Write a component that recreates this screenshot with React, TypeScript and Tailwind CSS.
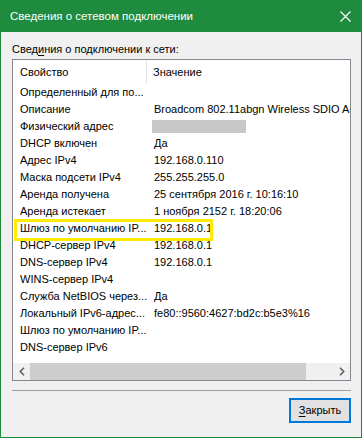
const rows: [string, string | null][] = [
  ['Определенный для по...', ''],
  ['Описание', 'Broadcom 802.11abgn Wireless SDIO Adapter'],
  ['Физический адрес', null],
  ['DHCP включен', 'Да'],
  ['Адрес IPv4', '192.168.0.110'],
  ['Маска подсети IPv4', '255.255.255.0'],
  ['Аренда получена', '25 сентября 2016 г. 10:16:10'],
  ['Аренда истекает', '1 ноября 2152 г. 18:20:06'],
  ['Шлюз по умолчанию IP...', '192.168.0.1'],
  ['DHCP-сервер IPv4', '192.168.0.1'],
  ['DNS-сервер IPv4', '192.168.0.1'],
  ['WINS-сервер IPv4', ''],
  ['Служба NetBIOS через...', 'Да'],
  ['Локальный IPv6-адрес...', 'fe80::9560:4627:bd2c:b5e3%16'],
  ['Шлюз по умолчанию IP...', ''],
  ['DNS-сервер IPv6', ''],
];

function Chevron({ dir }: { dir: 'left' | 'right' }) {
  return (
    <svg width="6" height="9" viewBox="0 0 6 9" fill="none">
      <path
        d={dir === 'left' ? 'M5 0.8 L1.3 4.5 L5 8.2' : 'M1 0.8 L4.7 4.5 L1 8.2'}
        stroke="#606060"
        strokeWidth="1.6"
      />
    </svg>
  );
}

export default function App() {
  return (
    <div
      className="w-[362px] h-[438px] flex flex-col border border-[#1f8b3e] bg-[#f0f0f0] text-black text-[11px]"
      style={{ fontFamily: '"Liberation Sans", Arial, sans-serif' }}
    >
      {/* title bar */}
      <div className="h-[31px] shrink-0 bg-[#1f8b3e] flex items-center justify-between pl-[9px] pr-[10px]">
        <span className="text-white text-[11.5px] leading-none">Сведения о сетевом подключении</span>
        <svg width="11" height="11" viewBox="0 0 11 11" stroke="#fff" strokeWidth="1.1">
          <path d="M0.5 0.5 L10.5 10.5 M10.5 0.5 L0.5 10.5" />
        </svg>
      </div>

      <div className="flex-1 flex flex-col pl-[11px] pr-[10px] pt-[9px]">
        <div className="h-[16px] leading-[16px] whitespace-nowrap">
          Свед<span className="underline underline-offset-2">и</span>ния о подключении к сети:
        </div>

        {/* list view */}
        <div className="mt-[2px] h-[322px] border border-[#828790] bg-white flex flex-col overflow-hidden">
          <div className="h-[24px] shrink-0 flex items-center">
            <div className="w-[134px] h-full pl-[7px] flex items-center border-r border-[#e5e5e5]">Свойство</div>
            <div className="pl-[6px]">Значение</div>
          </div>

          <div className="flex-1 flex flex-col">
            {rows.map(([k, v], i) => (
              <div key={i} className="relative h-[17px] flex items-center whitespace-nowrap">
                <div className="w-[135px] shrink-0 pl-[7px] overflow-hidden">{k}</div>
                <div className="pl-[6px]">
                  {v === null ? <div className="w-[94px] h-[13px] bg-[#c8c8c8] -ml-[2px]" /> : v}
                </div>
                {i === 8 && (
                  <div className="absolute left-[1px] top-[-1px] w-[199px] h-[22px] border-[3px] border-[#ffeb00]" />
                )}
              </div>
            ))}
          </div>

          {/* horizontal scrollbar */}
          <div className="h-[17px] shrink-0 flex bg-[#f0f0f0]">
            <div className="w-[17px] flex items-center justify-center">
              <Chevron dir="left" />
            </div>
            <div className="flex-1 flex">
              <div className="w-[276px] bg-[#cdcdcd]" />
            </div>
            <div className="w-[17px] flex items-center justify-center">
              <Chevron dir="right" />
            </div>
          </div>
        </div>

        <div className="mt-[9px] h-px bg-[#a0a0a0]" />

        <div className="mt-[7px] flex justify-end">
          <button className="w-[62px] h-[25px] bg-[#e1e1e1] border-2 border-[#0078d7] flex items-center justify-center">
            <span className="underline underline-offset-2 decoration-1">З</span>акрыть
          </button>
        </div>
      </div>
    </div>
  );
}
